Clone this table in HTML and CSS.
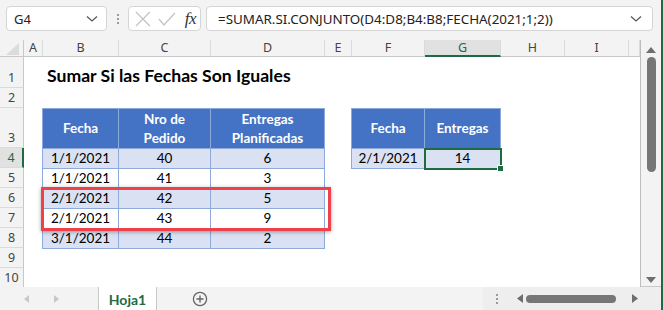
FILE: index.html
```html
<!DOCTYPE html>
<html>

<head>
    <title>Hoja1</title>
    <link rel="stylesheet" href="styles.css">
</head>
<body>
    <div class="app">
        <!-- name box + formula bar -->
        <div class="bar">
            <div class="name-box">
                <span>G4</span>
                <svg class="chev" width="12" height="8" viewBox="0 0 12 8"><path d="M1 1.5 L6 6 L11 1.5" fill="none" stroke="#555" stroke-width="1.2"/></svg>
            </div>
            <div class="grip"><i></i><i></i><i></i></div>
            <div class="fx-box">
                <svg width="18" height="18" viewBox="0 0 18 18"><path d="M2 2 L16 16 M16 2 L2 16" stroke="#c4c4c4" stroke-width="1.3" fill="none"/></svg>
                <svg width="20" height="18" viewBox="0 0 20 18"><path d="M2 9 L7 15 L18 3" stroke="#c4c4c4" stroke-width="1.3" fill="none"/></svg>
                <span class="fx">fx</span>
            </div>
            <div class="formula">
                <span>=SUMAR.SI.CONJUNTO(D4:D8;B4:B8;FECHA(2021;1;2))</span>
                <svg class="chev" width="12" height="8" viewBox="0 0 12 8"><path d="M1 1.5 L6 6 L11 1.5" fill="none" stroke="#555" stroke-width="1.2"/></svg>
            </div>
        </div>

        <div class="work">
            <div class="sheet">
                <div class="corner"><svg width="20" height="14" viewBox="0 0 20 14"><path d="M6 13 L19 13 L19 1 Z" fill="#dcdcdc"/></svg></div>
                <div class="ch">A</div>
                <div class="ch">B</div>
                <div class="ch">C</div>
                <div class="ch">D</div>
                <div class="ch">E</div>
                <div class="ch">F</div>
                <div class="ch ch-on">G</div>
                <div class="ch">H</div>
                <div class="ch">I</div>
                <div class="ch"></div>

                <div class="rh r1">1</div>
                <div class="rh r2">2</div>
                <div class="rh r3">3</div>
                <div class="rh r4 rh-on">4</div>
                <div class="rh r5">5</div>
                <div class="rh r6">6</div>
                <div class="rh r7">7</div>
                <div class="rh r8">8</div>
                <div class="rh r9">9</div>
                <div class="rh r10">10</div>

                <div class="title">Sumar Si las Fechas Son Iguales</div>

                <table class="tbl tbl-main">
                    <colgroup><col class="w-b"><col class="w-c"><col class="w-d"></colgroup>
                    <tr class="head"><th>Fecha</th><th>Nro de<br>Pedido</th><th>Entregas<br>Planificadas</th></tr>
                    <tr class="band"><td>1/1/2021</td><td>40</td><td>6</td></tr>
                    <tr><td>1/1/2021</td><td>41</td><td>3</td></tr>
                    <tr class="band"><td>2/1/2021</td><td>42</td><td>5</td></tr>
                    <tr><td>2/1/2021</td><td>43</td><td>9</td></tr>
                    <tr class="band"><td>3/1/2021</td><td>44</td><td>2</td></tr>
                </table>

                <table class="tbl tbl-side">
                    <colgroup><col class="w-f"><col class="w-g"></colgroup>
                    <tr class="head"><th>Fecha</th><th>Entregas</th></tr>
                    <tr class="band"><td>2/1/2021</td><td class="sel">14<span class="handle"></span></td></tr>
                </table>

                <div class="mark"></div>
            </div>

            <div class="vscroll">
                <svg width="12" height="8" viewBox="0 0 12 8"><path d="M1 7 L6 1 L11 7 Z" fill="#6e6e6e"/></svg>
                <div class="vthumb"></div>
                <svg class="vdown" width="12" height="8" viewBox="0 0 12 8"><path d="M1 1 L6 7 L11 1 Z" fill="#6e6e6e"/></svg>
            </div>
        </div>

        <div class="tabs">
            <div class="nav">
                <svg width="6" height="8" viewBox="0 0 6 8"><path d="M5 0 L0 4 L5 8 Z" fill="#c8c8c8"/></svg>
                <svg width="6" height="8" viewBox="0 0 6 8"><path d="M1 0 L6 4 L1 8 Z" fill="#c8c8c8"/></svg>
            </div>
            <div class="tab">Hoja1</div>
            <div class="add">
                <svg width="16" height="16" viewBox="0 0 16 16"><circle cx="8" cy="8" r="6.6" fill="none" stroke="#666" stroke-width="1.3"/><path d="M8 4.5 V11.5 M4.5 8 H11.5" stroke="#666" stroke-width="1.4"/></svg>
            </div>
            <div class="hscroll">
                <div class="hgrip"><i></i><i></i><i></i></div>
                <svg width="6" height="9" viewBox="0 0 6 9"><path d="M6 0 L0 4.5 L6 9 Z" fill="#6e6e6e"/></svg>
                <div class="hthumb"></div>
                <svg class="hright" width="6" height="9" viewBox="0 0 6 9"><path d="M0 0 L6 4.5 L0 9 Z" fill="#6e6e6e"/></svg>
            </div>
        </div>
    </div>
</body>

</html>
```

FILE: styles.css
```css
html, body {
    margin: 0;
    padding: 0;
    background: #ffffff;
}

.app {
    width: 663px;
    height: 310px;
    box-sizing: border-box;
    border-right: 2px solid #1d6b40;
    background: #f3f3f3;
    font-family: "Noto Sans", sans-serif;
    overflow: hidden;
}

/* formula bar */
.bar {
    height: 40px;
    display: flex;
    align-items: flex-start;
    padding: 6px 0 0 6px;
    box-sizing: border-box;
}
.name-box, .fx-box, .formula {
    height: 25px;
    box-sizing: border-box;
    background: #fff;
    border: 1px solid #d5d5d5;
    border-radius: 4px;
    display: flex;
    align-items: center;
}
.name-box {
    width: 101px;
    padding: 0 8px 0 7px;
    justify-content: space-between;
    font-size: 13px;
    color: #222;
}
.grip {
    width: 21px;
    height: 25px;
    display: flex;
    flex-direction: column;
    align-items: center;
    justify-content: center;
    gap: 2px;
}
.grip i, .hgrip i {
    display: block;
    width: 2px;
    height: 2px;
    background: #9a9a9a;
}
.fx-box {
    width: 73px;
    padding: 0 4px 0 5px;
    gap: 5px;
}
.fx {
    font-family: "Liberation Serif", serif;
    font-style: italic;
    font-size: 17px;
    color: #333;
    margin-left: 3px;
    letter-spacing: -0.5px;
}
.formula {
    margin-left: 5px;
    width: 447px;
    padding: 0 10px 0 11px;
    justify-content: space-between;
    font-size: 13.4px;
    color: #222;
}

/* sheet */
.work {
    display: flex;
    height: 247px;
}
.sheet {
    position: relative;
    width: 641px;
    height: 247px;
    box-sizing: border-box;
    border-right: 1px solid #bdbdbd;
    background: #fff;
    overflow: hidden;
    display: grid;
    grid-template-columns: 24px 19px 76px 92px 114px 27px 73px 76px 64px 64px 11px;
    grid-template-rows: 17px 31px 20px 40px repeat(7, 20px);
    font-family: "Lato", sans-serif;
}
.corner {
    background: #f3f3f3;
    border-right: 1px solid #c8c8c8;
    border-bottom: 1px solid #c8c8c8;
    display: flex;
    align-items: flex-end;
}
.ch {
    background: #f3f3f3;
    border-right: 1px solid #dadada;
    border-bottom: 1px solid #c8c8c8;
    font-family: "Noto Sans", sans-serif;
    font-size: 12.5px;
    color: #444;
    text-align: center;
    line-height: 16px;
}
.ch-on {
    background: #e1e1e1;
    color: #1d6b40;
    border-bottom: 2px solid #1d6b40;
}
.rh {
    grid-column: 1;
    background: #f3f3f3;
    border-right: 1px solid #c8c8c8;
    border-bottom: 1px solid #dadada;
    font-family: "Noto Sans", sans-serif;
    font-size: 12.5px;
    color: #444;
    display: flex;
    align-items: flex-end;
    justify-content: center;
    line-height: 18px;
}
.rh-on {
    background: #e1e1e1;
    color: #1d6b40;
    border-right: 2px solid #1d6b40;
}
.r1 { grid-row: 2; }
.r2 { grid-row: 3; }
.r3 { grid-row: 4; }
.r4 { grid-row: 5; }
.r5 { grid-row: 6; }
.r6 { grid-row: 7; }
.r7 { grid-row: 8; }
.r8 { grid-row: 9; }
.r9 { grid-row: 10; }
.r10 { grid-row: 11; }

.title {
    grid-column: 3 / 10;
    grid-row: 2;
    align-self: center;
    padding: 5px 0 0 4px;
    font-weight: bold;
    font-size: 17.6px;
    color: #000;
}

/* data tables */
.tbl {
    border-collapse: collapse;
    table-layout: fixed;
    font-size: 13.5px;
    color: #000;
    margin-left: -1px;
}
.tbl-main {
    grid-column: 3 / 6;
    grid-row: 4 / 10;
    width: 283px;
}
.tbl-side {
    grid-column: 7 / 9;
    grid-row: 4 / 6;
    width: 150px;
}
.w-b { width: 76px; }
.w-c { width: 92px; }
.w-d { width: 114px; }
.w-f { width: 73px; }
.w-g { width: 76px; }
.tbl th, .tbl td {
    border: 1px solid #8eaadb;
    padding: 0;
    text-align: center;
    height: 19px;
    line-height: 19px;
}
.tbl .head th {
    height: 39px;
    line-height: 19px;
    background: #4472c4;
    color: #fff;
    font-weight: bold;
}
.tbl .band td {
    background: #d9e1f2;
}
.sel {
    position: relative;
    outline: 2px solid #1d6b40;
    outline-offset: -1px;
}
.handle {
    position: absolute;
    right: -4px;
    bottom: -4px;
    width: 5px;
    height: 5px;
    background: #1d6b40;
    border: 1px solid #fff;
}

/* highlighted rows 6-7 */
.mark {
    position: absolute;
    left: 41px;
    top: 147px;
    width: 290px;
    height: 44px;
    box-sizing: border-box;
    border: 3px solid #ee4149;
    box-shadow: 0 1px 4px rgba(0, 0, 0, 0.35);
}

/* scrollbars */
.vscroll {
    width: 20px;
    display: flex;
    flex-direction: column;
    align-items: center;
    padding-top: 6px;
    box-sizing: border-box;
}
.vthumb {
    width: 9px;
    height: 115px;
    margin-top: 3px;
    border-radius: 5px;
    background: #767676;
}
.vdown {
    margin-top: auto;
    margin-bottom: 3px;
}

.tabs {
    display: flex;
    align-items: stretch;
    border-top: 1px solid #c8c8c8;
    box-sizing: border-box;
    margin-top: -1px;
    height: 24px;
}
.nav {
    width: 98px;
    display: flex;
    align-items: center;
    padding-left: 24px;
    gap: 23px;
    box-sizing: border-box;
}
.tab {
    width: 59px;
    margin-top: -1px;
    background: #fff;
    border-left: 1px solid #c8c8c8;
    border-right: 1px solid #c8c8c8;
    box-sizing: border-box;
    color: #1d6b40;
    font-family: "Lato", sans-serif;
    font-weight: bold;
    font-size: 14px;
    display: flex;
    align-items: center;
    justify-content: center;
    padding-top: 2px;
}
.add {
    width: 85px;
    display: flex;
    align-items: center;
    justify-content: center;
    padding-top: 1px;
}
.hscroll {
    margin-left: auto;
    width: 178px;
    display: flex;
    align-items: center;
    padding-left: 13px;
    box-sizing: border-box;
    background: #eeeeee;
}
.hgrip {
    display: flex;
    flex-direction: column;
    gap: 2px;
    margin-right: 19px;
}
.hthumb {
    width: 90px;
    height: 8px;
    margin-left: 3px;
    border-radius: 4px;
    background: #767676;
}
.hright {
    margin-left: 16px;
}
```
